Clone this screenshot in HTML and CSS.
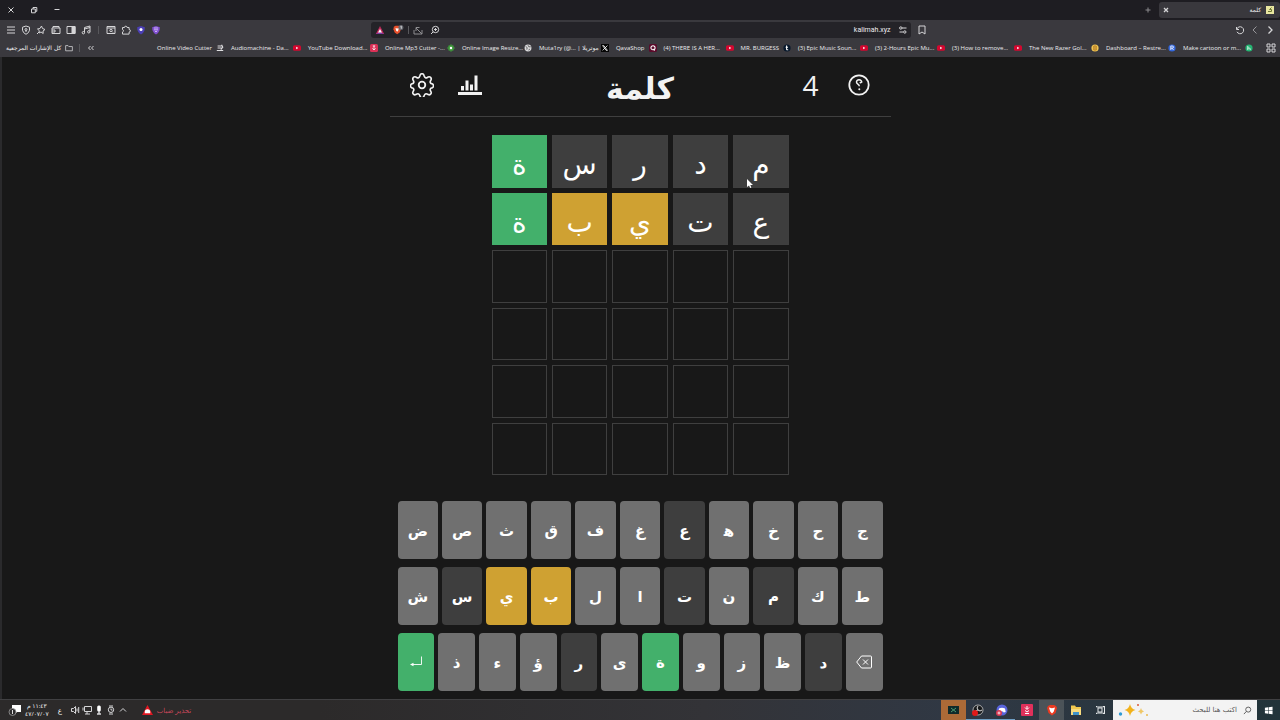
FILE: index.html
```html
<!DOCTYPE html>
<html lang="ar" dir="rtl">
<head>
  <meta charset="UTF-8" />
  <meta name="viewport" content="width=device-width, initial-scale=1" />
  <title>كلمة</title>
  <link rel="stylesheet" href="styles.css">
</head>
<body>
  <svg class="sprite" aria-hidden="true">
    <symbol id="yt" viewBox="0 0 10 10"><rect x="0" y="1.5" width="10" height="7" rx="2" fill="#d4072f"/><path d="M4 3.5v3l2.6-1.5z" fill="#fff"/></symbol>
  </svg>

  <div class="tabs">
    <div class="tab">
      <svg class="fav" viewBox="0 0 8 8"><rect width="8" height="8" fill="#e8e6a0"/><path d="M5.5 1.5L3.5 3.5h2v2H2" fill="none" stroke="#6b7430"/></svg>
      <span class="tab-title">كلمة</span>
      <button class="icon-btn" aria-label="إغلاق التبويب"><svg viewBox="0 0 10 10"><path d="M3 3l4 4M7 3L3 7" stroke-width="1.3"/></svg></button>
    </div>
    <button class="icon-btn dim" aria-label="تبويب جديد"><svg viewBox="0 0 10 10"><path d="M5 2.5v5M2.5 5h5"/></svg></button>
    <div class="window-buttons">
      <button class="icon-btn" aria-label="تصغير"><svg viewBox="0 0 10 10"><path d="M2.5 4.5h5"/></svg></button>
      <button class="icon-btn" aria-label="استعادة"><svg viewBox="0 0 10 10"><path d="M2.5 4h3.8v3.8H2.5zM4 4V2.5h3.8v3.8H6.3"/></svg></button>
      <button class="icon-btn" aria-label="إغلاق"><svg viewBox="0 0 10 10"><path d="M2.5 2.5l5 5M7.5 2.5l-5 5"/></svg></button>
    </div>
  </div>

  <div class="toolbar">
    <div class="nav">
      <button class="icon-btn" aria-label="رجوع"><svg viewBox="0 0 10 10"><path d="M3.5 1.5L7 5 3.5 8.5" stroke-width="1.3"/></svg></button>
      <button class="icon-btn dim" aria-label="تقدم"><svg viewBox="0 0 10 10"><path d="M6.5 1.5L3 5l3.5 3.5"/></svg></button>
      <button class="icon-btn" aria-label="تحديث"><svg viewBox="0 0 10 10"><path d="M1.5 2v2.5H4M1.8 4.2A3.5 3.5 0 1 1 2 6.8"/></svg></button>
      <button class="icon-btn save" aria-label="إشارة مرجعية"><svg viewBox="0 0 10 10"><path d="M2 1h6v8L5 7 2 9z"/></svg></button>
    </div>
    <div class="address">
      <svg class="ico" viewBox="0 0 10 10"><path d="M4 3h4.500M5 7H1.500"/><circle cx="2.800" cy="3" r="1.200"/><circle cx="6.800" cy="7" r="1.200"/></svg>
      <input type="text" value="kalimah.xyz" aria-label="العنوان" dir="ltr">
      <svg class="ico" viewBox="0 0 10 10"><circle cx="5.5" cy="4.5" r="3.2"/><path d="M3.2 6.800L1 9M4 4.500h3M5.500 3v3"/></svg>
      <svg class="ico dim" viewBox="0 0 10 10"><path d="M1 5v4h8V5M9 9L3 3M3 6V2.500h3.500"/></svg>
      <span class="sep"></span>
      <svg class="ico shield" viewBox="0 0 14 12"><path d="M2 2l2-1h4l2 1 .5 3L9 9l-3 2-3-2-1.5-4z" fill="#e8502c" stroke="none"/><path d="M4 3.5l2 .7 2-.7-.7 3L6 8 4.700 6.500z" fill="#fff" stroke="none"/><circle cx="10.5" cy="3" r="3" fill="#66686f" stroke="none"/><path d="M10 2l1-.5v3" stroke="#fff" stroke-width=".8"/></svg>
      <svg class="ico" viewBox="0 0 10 10"><path d="M5 1L.8 9h8.4z" fill="#c02a5a" stroke="none"/><path d="M.8 9L5 7l4.200 2z" fill="#7a3aa5" stroke="none"/><path d="M5 4L3 7.500h4z" fill="#fff" stroke="none"/></svg>
    </div>
    <div class="tools">
      <button class="icon-btn" aria-label="القائمة"><svg viewBox="0 0 10 10"><path d="M1 2h8M1 5h8M1 8h8"/></svg></button>
      <button class="icon-btn" aria-label="VPN"><svg viewBox="0 0 10 10"><path d="M5 1l3.5 1.2v3Q8 8 5 9.300 2 8 1.500 5.200v-3z"/><circle cx="5" cy="4.500" r="1"/><path d="M5 5v2"/></svg></button>
      <button class="icon-btn" aria-label="ليو"><svg viewBox="0 0 10 10"><path d="M5.5 1l1 2.500L9 4.500 7 6l.2 2.500L5 7 3 8l.3-2.300L1.500 4l2.500-.5zM3 7L1 9"/></svg></button>
      <button class="icon-btn" aria-label="المحفظة"><svg viewBox="0 0 10 10"><path d="M1 3h8v5.500H1zM2 3V1.500h6V3M1 5h3v2H1"/></svg></button>
      <button class="icon-btn" aria-label="الشريط الجانبي"><svg viewBox="0 0 10 10"><path d="M1 1.500h8v7H1z"/><path d="M6 1.500h3v7H6z" fill="#d5d5d7"/></svg></button>
      <button class="icon-btn" aria-label="الوسائط"><svg viewBox="0 0 10 10"><path d="M3.500 7.500V2.500L9 1v5.500M3.500 4L9 2.500"/><circle cx="2.400" cy="7.700" r="1.200"/><circle cx="7.800" cy="6.800" r="1.200"/></svg></button>
      <span class="sep"></span>
      <button class="icon-btn" aria-label="بحث في الصفحة"><svg viewBox="0 0 10 10"><path d="M1 1.500h8v7H1zM1 3h8"/><circle cx="5" cy="5.500" r="1.200"/><path d="M6 6.500l1 1"/></svg></button>
      <button class="icon-btn" aria-label="الإضافات"><svg viewBox="0 0 10 10"><path d="M1.500 2.500h2a1.300 1.300 0 0 1 2.600 0h2v2a1.300 1.300 0 0 1 0 2.600v2H1.500V7a1.300 1.300 0 0 0 0-2.500z"/></svg></button>
      <button class="icon-btn" aria-label="إضافة الحماية"><svg viewBox="0 0 10 10"><path d="M5 1l3.800 1.200Q9 7 5 9.500 1 7 1.200 2.200z" fill="#4b3fb5" stroke="none"/><circle cx="5" cy="4.500" r="1.500" fill="#fff" stroke="none"/></svg></button>
      <button class="icon-btn" aria-label="إضافة الخصوصية"><svg viewBox="0 0 10 10"><path d="M5 1l3.800 1.200Q9 7 5 9.500 1 7 1.200 2.200z" fill="#8050d0" stroke="none"/><path d="M3 3h4M3 4.800h4M4 6.500h2" stroke="#cbb0f5"/></svg></button>
    </div>
  </div>

  <nav class="bookmarks">
    <button class="icon-btn apps" aria-label="التطبيقات"><svg viewBox="0 0 10 10"><path d="M1 1h3v3H1zM6 1h3v3H6zM1 6h3v3H1zM6 6h3v3H6z"/></svg></button>
    <a href="#"><svg viewBox="0 0 10 10"><circle cx="5" cy="5" r="4.5" fill="#25b573"/><path d="M3.500 2.500v5M3.500 5.500q3-2 3 2" stroke="#fff"/></svg><span class="name cut">Make cartoon or m...</span></a>
    <a href="#"><svg viewBox="0 0 10 10"><circle cx="5" cy="5" r="4.5" fill="#3468dc"/><path d="M3.500 7.500v-5H5q2 0 2 1.400T5 5.200H3.500M5 5.200l2 2.300" stroke="#fff"/></svg><span class="name cut">Dashboard – Restre...</span></a>
    <a href="#"><svg viewBox="0 0 10 10"><circle cx="5" cy="5" r="4.5" fill="#f0c552"/><path d="M3.500 2.500h3v5h-3zM4 5h2" stroke="#a76b19"/></svg><span class="name cut">The New Razer Gol...</span></a>
    <a href="#"><svg><use href="#yt"/></svg><span class="name cut">(3) How to remove...</span></a>
    <a href="#"><svg><use href="#yt"/></svg><span class="name cut">(3) 2-Hours Epic Mu...</span></a>
    <a href="#"><svg><use href="#yt"/></svg><span class="name cut">(3) Epic Music Soun...</span></a>
    <a href="#"><svg viewBox="0 0 10 10"><circle cx="5" cy="5" r="4.5" fill="#06172b"/><path d="M4.500 2v4.500q0 1 2 .7M3.300 4h3" stroke="#fff" stroke-width="1.3"/></svg><span class="name">MR. BURGESS</span></a>
    <a href="#"><svg><use href="#yt"/></svg><span class="name cut">(4) THERE IS A HER...</span></a>
    <a href="#"><svg viewBox="0 0 10 10"><rect width="10" height="10" rx="2" fill="#5b0b2b"/><circle cx="5" cy="4.700" r="2.600" stroke="#fff" stroke-width="1.3"/><path d="M5.500 6l1.500 2.500" stroke="#fff"/></svg><span class="name">QavaShop</span></a>
    <a href="#"><svg viewBox="0 0 10 10"><rect width="10" height="10" fill="#050505"/><path d="M2 2h1.500L8 8H6.500zM8 2L2 8" stroke="#fff"/></svg><span class="name cut">Muta1ry (@... | موتريلا</span></a>
    <a href="#"><svg viewBox="0 0 10 10"><circle cx="5" cy="5" r="4.300" fill="#dadadc"/><path d="M2 3l2 1.500L3.500 7M5 1.500L6 3.500h2.500M6 8l1-2" stroke="#444"/></svg><span class="name cut">Online Image Resize...</span></a>
    <a href="#"><svg viewBox="0 0 10 10"><path d="M5 .5v9M.5 5h9M2 2l6 6M8 2L2 8" stroke="#3f9e3b" stroke-width="2"/><circle cx="5" cy="5" r="1.500" fill="#fff"/></svg><span class="name cut">Online Mp3 Cutter -...</span></a>
    <a href="#"><svg viewBox="0 0 10 10"><rect width="10" height="10" rx="2" fill="#dc3157"/><path d="M5 2v5M3 5.500l2 2 2-2M3.500 2.500h3" stroke="#fff"/></svg><span class="name cut">YouTube Download...</span></a>
    <a href="#"><svg><use href="#yt"/></svg><span class="name cut">Audiomachine - Da...</span></a>
    <a href="#"><svg viewBox="0 0 10 10"><path d="M2 2.500h5M2 5h6M1 8h8M7 1l1.500 3L6 7" stroke="#dedee0" stroke-width="1.3"/></svg><span class="name">Online Video Cutter</span></a>
    <div class="more">
      <button class="icon-btn" aria-label="المزيد"><svg viewBox="0 0 10 10"><path d="M4.500 3l-2 2 2 2M7.500 3l-2 2 2 2"/></svg></button>
      <span class="sep"></span>
      <a href="#"><svg viewBox="0 0 10 10"><path d="M.8 2h3l1 1.200h4.400v5.300H.8z" stroke="#cfcfd2"/></svg><span class="all">كل الإشارات المرجعية</span></a>
    </div>
  </nav>

  <main class="game">
    <header>
      <div class="side">
        <button aria-label="مساعدة"><svg viewBox="0 0 24 24"><circle cx="12" cy="12" r="9.700" stroke-width="1.800"/><path d="M14.800 9.500C14.500 5.800 9.500 6 9.500 9c0 2.500 2.800 1.800 2.800 4.300M14.800 9q-1.200 1.200-2 .2" stroke-width="1.500"/><circle cx="12.300" cy="16.300" r="1" fill="#f2f2f2" stroke="none"/></svg></button>
        <span class="streak">4</span>
      </div>
      <h1>كلمة</h1>
      <div class="side">
        <button aria-label="الإحصائيات"><svg viewBox="0 0 24 24"><path d="M0 19h24v3H0zM3 13h3v4.500H3zM7.500 7.500h3v10h-3zM12 11.500h3v6h-3zM16.500 2.500h3v15h-3z" fill="#f2f2f2" stroke="none"/></svg></button>
        <button aria-label="الإعدادات"><svg viewBox="0 0 16 16"><circle cx="8" cy="8" r="2.200" stroke-width="1.200"/><path d="M9.300 1.500c-.4-1.300-2.200-1.300-2.600 0l-.3.900a1.200 1.200 0 0 1-1.700.7l-.8-.4c-1.200-.6-2.500.6-1.900 1.900l.4.800a1.200 1.200 0 0 1-.7 1.700l-.4.100c-1.300.5-1.300 2.300 0 2.700l.4.100a1.200 1.200 0 0 1 .7 1.700l-.4.800c-.6 1.200.7 2.500 1.900 1.900l.8-.4a1.200 1.200 0 0 1 1.700.7l.3.800c.4 1.300 2.200 1.300 2.600 0l.3-.8a1.200 1.200 0 0 1 1.700-.7l.8.400c1.200.6 2.500-.7 1.900-1.900l-.4-.8a1.200 1.200 0 0 1 .7-1.700l.4-.1c1.300-.4 1.300-2.200 0-2.700l-.4-.1a1.200 1.200 0 0 1-.7-1.700l.4-.8c.6-1.300-.7-2.500-1.900-1.900l-.8.400a1.200 1.200 0 0 1-1.700-.7z" stroke-width="1.100"/></svg></button>
      </div>
    </header>

    <div class="board">
      <div class="tile absent">م<svg class="cursor" viewBox="0 0 6 9"><path d="M0 0v8l2-1.500L3.200 9l1.200-.6L3.300 6H6z" fill="#fff"/></svg></div>
      <div class="tile absent">د</div>
      <div class="tile absent">ر</div>
      <div class="tile absent">س</div>
      <div class="tile correct">ة</div>
      <div class="tile absent">ع</div>
      <div class="tile absent">ت</div>
      <div class="tile present">ي</div>
      <div class="tile present">ب</div>
      <div class="tile correct">ة</div>
      <div class="tile"></div><div class="tile"></div><div class="tile"></div><div class="tile"></div><div class="tile"></div>
      <div class="tile"></div><div class="tile"></div><div class="tile"></div><div class="tile"></div><div class="tile"></div>
      <div class="tile"></div><div class="tile"></div><div class="tile"></div><div class="tile"></div><div class="tile"></div>
      <div class="tile"></div><div class="tile"></div><div class="tile"></div><div class="tile"></div><div class="tile"></div>
    </div>

    <div class="keyboard">
      <div class="row">
        <button>ج</button><button>ح</button><button>خ</button><button>ه&zwj;</button><button class="absent">ع</button><button>غ</button><button>ف</button><button>ق</button><button>ث</button><button>ص</button><button>ض</button>
      </div>
      <div class="row">
        <button>ط</button><button>ك</button><button class="absent">م</button><button>ن</button><button class="absent">ت</button><button>ا</button><button>ل</button><button class="present">ب</button><button class="present">ي</button><button class="absent">س</button><button>ش</button>
      </div>
      <div class="row">
        <button aria-label="حذف"><svg viewBox="0 0 16 16"><path d="M5.500 2h9q1 0 1 1v10q0 1-1 1h-9L.7 8zM7 5.500l5 5M12 5.500l-5 5"/></svg></button><button class="absent">د</button><button>ظ</button><button>ز</button><button>و</button><button class="correct">ة</button><button>ى</button><button class="absent">ر</button><button>ؤ</button><button>ء</button><button>ذ</button><button class="correct" aria-label="إدخال"><svg viewBox="0 0 16 16"><path d="M13.500 2.500v8H3" stroke-width=".9"/><path d="M2 10.500L5.500 8.800v3.400z" fill="#fff" stroke="none"/></svg></button>
      </div>
    </div>
  </main>

  <footer class="taskbar">
    <button class="start" aria-label="ابدأ"><svg viewBox="0 0 10 10"><path d="M1 2l3.600-.5v3.200H1zM5.200 1.400L9.500.8v3.900H5.200zM1 5.300h3.600v3.200L1 8zM5.200 5.300h4.300v3.900l-4.300-.6z" fill="#fff"/></svg></button>
    <label class="search">
      <svg class="glass" viewBox="0 0 10 10"><circle cx="5.800" cy="4" r="2.800"/><path d="M3.800 6L1 9"/></svg>
      <input type="text" placeholder="اكتب هنا للبحث" aria-label="بحث">
      <svg class="sparkle" viewBox="0 0 32 16"><path d="M12 2q1 5 5.500 6-4.500 1-5.500 6-1-5-5.500-6 4.500-1 5.500-6z" fill="#f2b21b"/><path d="M23 6q.5 3 3 3.500-2.500.5-3 3-.5-2.500-3-3 2.500-.5 3-3.500z" fill="#f0c765"/><circle cx="2.500" cy="12" r="1.700" fill="#2e9bd6"/><circle cx="20" cy="3" r="1" fill="#d85b3a"/><circle cx="29" cy="13" r="1" fill="#eabb4e"/></svg>
    </label>
    <div class="apps-row">
      <button aria-label="عرض المهام"><svg viewBox="0 0 12 12"><path d="M3 4h4v4H3zM9.500 2v8M1.500 2v1h7V2M1.500 10V9h7v1" stroke="#e4e8ea"/></svg></button>
      <button aria-label="الملفات"><svg viewBox="0 0 12 12"><path d="M1 1.500h4l1 1.500h5v8H1z" fill="#f3c94f"/><path d="M1 5h10v6H1z" fill="#f8dc7f"/><path d="M3 8h6v3H3z" fill="#3f93c9"/></svg></button>
      <button class="active" aria-label="Brave"><svg viewBox="0 0 12 12"><path d="M2 2l2-1h4l2 1 1 2-1.500 5L6 11.500 2.500 9 1 4z" fill="#ea3a20"/><path d="M3 3.500l3 .7 3-.7-1.200 4L6 9.500 4.200 7.500z" fill="#fff"/></svg></button>
      <button aria-label="التنزيلات"><svg viewBox="0 0 12 12"><rect width="12" height="12" rx="1" fill="#e0305b"/><path d="M6 2v3M4 3.500l2 2 2-2M4 6.500l2 1.500 2-1.500M4 9.500h4" stroke="#fff"/></svg></button>
      <button class="open" aria-label="Discord"><svg viewBox="0 0 12 12"><circle cx="6" cy="6" r="5.500" fill="#5965dc"/><path d="M3 4.500q3-1.500 6 0l.7 3.500-2 .5-.7-1H5l-.7 1-2-.5z" fill="#fff"/><circle cx="3" cy="9" r="3" fill="#d93850"/><path d="M1.500 9h3M3 7.500v3" stroke="#fff" stroke-width=".8"/></svg></button>
      <button class="open" aria-label="OBS"><svg viewBox="0 0 12 12"><circle cx="6" cy="6" r="5" fill="#17191b" stroke="#c8c8c8" stroke-width=".8"/><path d="M6 2q-2 2 0 4 2 2 4 0M6 6q-3 0-3 3" stroke="#ddd"/><circle cx="3" cy="9" r="3" fill="#e11919"/></svg></button>
      <button class="orange" aria-label="لوحة"><svg viewBox="0 0 12 12"><rect x="1" y="2" width="11" height="8" fill="#102a2a"/><path d="M4 4l5 4M9 4L4 8" stroke="#4f9b72"/></svg></button>
    </div>
    <div class="tray">
      <div class="weather">
        <svg viewBox="0 0 12 12"><path d="M6 0l6 11H0z" fill="#e01620"/><path d="M3 9V7.500a3 3 0 0 1 6 0V9z" fill="#fff"/></svg>
        <span>تحذير ضباب</span>
      </div>
      <svg class="ico" viewBox="0 0 10 10"><path d="M2 6.500L5 3.500l3 3"/></svg>
      <svg class="ico" viewBox="0 0 10 10"><circle cx="5" cy="4.800" r="2.700"/><path d="M3 1h4M3 9h4M5 3.500V5h1.500"/></svg>
      <svg class="ico" viewBox="0 0 10 10"><rect x="3.200" y=".5" width="3.600" height="6" rx="1.500" fill="#fff" stroke="none"/><path d="M5 6v3M3 9h4" stroke-width="1.500"/></svg>
      <svg class="ico" viewBox="0 0 10 10"><path d="M2.500 1.500h7v5h-7zM1 2.500v3M5 6.500V9M3 9h5"/></svg>
      <svg class="ico" viewBox="0 0 10 10"><path d="M5.500 1.500v7L3.500 6.500h-2v-3h2zM7 3.500v3M8.700 2v6"/></svg>
      <span class="lang">ع</span>
      <div class="clock"><span>١١:٤٣ م</span><span>٤٧/٠٧/٠٧</span></div>
      <svg class="ico note" viewBox="0 0 14 12"><path d="M4 1h9v7H9l-2 2V8H4z" fill="#fff" stroke="none"/><circle cx="4.500" cy="8" r="3.500" fill="#2d2c2d" stroke="#999" stroke-width=".8"/><path d="M4.500 6v4" stroke="#ddd"/></svg>
    </div>
  </footer>
</body>
</html>
```
FILE: styles.css
```css
* {
  box-sizing: border-box;
}
body {
  margin: 0;
  min-height: 100vh;
  display: flex;
  flex-direction: column;
  background: #181818;
  color: #f2f2f2;
  font-family: "Open Sans", "DejaVu Sans", sans-serif;
}
button {
  font-family: inherit;
  color: inherit;
  border: none;
  padding: 0;
  background: none;
  cursor: pointer;
}
svg {
  display: block;
  fill: none;
}
a {
  color: inherit;
  text-decoration: none;
}
.sprite {
  display: none;
}

/* browser window */
.icon-btn, .ico {
  width: 10px;
  height: 10px;
  flex: none;
  stroke: #d5d5d7;
}
.dim {
  opacity: 0.6;
}
.sep {
  width: 1px;
  height: 8px;
  background: #58585c;
}
.tabs {
  height: 20px;
  display: flex;
  align-items: center;
  gap: 6px;
  background: #1e1d22;
}
.tab {
  width: 121px;
  height: 16px;
  padding: 0 6px 0 2px;
  display: flex;
  align-items: center;
  gap: 5px;
  background: #39383d;
  border-radius: 3px;
}
.fav {
  width: 8px;
  height: 8px;
}
.tab-title {
  flex: 1;
  font-size: 6px;
}
.window-buttons {
  margin-right: auto;
  padding-left: 6px;
  display: flex;
  gap: 13px;
}
.toolbar {
  height: 20px;
  padding: 0 5px 0 6px;
  display: grid;
  grid-template-columns: 1fr minmax(0, 540px) 1fr;
  align-items: center;
  background: #3a393e;
}
.nav, .tools, .address {
  display: flex;
  align-items: center;
  gap: 5px;
}
.tools {
  direction: ltr;
}
.tools .sep {
  margin: 0 2px;
}
.save {
  margin-right: auto;
  margin-left: 6px;
}
.address {
  height: 16px;
  padding: 0 3px 0 4px;
  gap: 7px;
  background: #242328;
  border-radius: 3px;
}
.address input {
  flex: 1;
  min-width: 0;
  padding: 0;
  border: none;
  background: none;
  color: #ececee;
  text-align: right;
  font: 7px Roboto, sans-serif;
}
.address .sep {
  margin: 0 -3px;
}
.address .shield {
  width: 12px;
}
.bookmarks {
  height: 17px;
  padding: 0 4px 2px 6px;
  display: flex;
  align-items: center;
  gap: 7px;
  background: #3a393e;
}
.bookmarks a {
  display: flex;
  align-items: center;
  gap: 4px;
}
.bookmarks a svg {
  width: 8px;
  height: 8px;
  flex: none;
}
.apps {
  margin-left: 6px;
}
.name {
  direction: ltr;
  white-space: nowrap;
  font: 6px "Open Sans", "DejaVu Sans", sans-serif;
  color: #ececee;
}
.cut {
  width: 58px;
}
.more {
  margin-right: auto;
  display: flex;
  align-items: center;
  gap: 6px;
}
.all {
  font: 6px "DejaVu Sans", sans-serif;
  white-space: nowrap;
}

/* game */
.game {
  flex: 1;
  display: flex;
  flex-direction: column;
  align-items: center;
  gap: 18px;
  padding-bottom: 8px;
  box-shadow: inset 2px 0 #2a2a2c;
}
header {
  width: 100%;
  max-width: 501px;
  height: 60px;
  padding: 0 20px 3px;
  display: flex;
  align-items: center;
  border-bottom: 1px solid #3f3f3f;
}
.side {
  flex: 1;
  display: flex;
  align-items: center;
  gap: 24px;
}
.side:last-child {
  justify-content: flex-end;
}
.side svg {
  width: 24px;
  height: 24px;
  stroke: #f2f2f2;
}
.streak {
  width: 24px;
  text-align: center;
  font-size: 28px;
  line-height: 32px;
}
h1 {
  margin: 0;
  padding-top: 6px;
  font-size: 30px;
  line-height: 48px;
}
.board {
  width: 100%;
  max-width: 297px;
  height: 340px;
  display: grid;
  grid-template-columns: repeat(5, 1fr);
  grid-template-rows: repeat(6, 1fr);
  gap: 5px;
}
.tile {
  position: relative;
  display: flex;
  align-items: center;
  justify-content: center;
  padding-top: 4px;
  border: 1px solid #3f3f3f;
  color: #fff;
  font-size: 28px;
  line-height: 32px;
}
.tile.absent, .keyboard .absent {
  background: #3e3e3e;
}
.tile.present, .keyboard .present {
  background: #cfa132;
  border-color: #cfa132;
}
.tile.correct, .keyboard .correct {
  background: #43b06b;
  border-color: #43b06b;
}
.cursor {
  position: absolute;
  left: 13px;
  top: 43px;
  width: 6px;
  height: 9px;
}
.keyboard {
  width: 100%;
  max-width: 501px;
  margin-top: auto;
  padding: 0 8px;
  display: flex;
  flex-direction: column;
  gap: 8px;
}
.row {
  display: flex;
  gap: 4px;
}
.row button {
  flex: 1;
  height: 58px;
  display: flex;
  align-items: center;
  justify-content: center;
  border-radius: 4px;
  background: #707070;
  color: #fff;
  font-size: 15px;
  font-weight: bold;
}
.row svg {
  width: 16px;
  height: 16px;
  stroke: #fff;
}

/* taskbar */
.taskbar {
  height: 21px;
  display: flex;
  align-items: stretch;
  border-top: 1px solid #404042;
  background: linear-gradient(to left, #22343a, #303844 25%, #333337 45%, #2c2a2a 75%);
}
.start {
  width: 23px;
  display: flex;
  align-items: center;
  justify-content: center;
}
.start svg {
  width: 9px;
  height: 9px;
}
.search {
  width: 144px;
  padding: 0 5px;
  display: flex;
  align-items: center;
  gap: 6px;
  background: #f3f3f3;
}
.glass {
  width: 9px;
  height: 9px;
  stroke: #555;
}
.search input {
  flex: 1;
  min-width: 0;
  padding: 0;
  border: none;
  background: none;
  font: 7px "DejaVu Sans", sans-serif;
}
.search input::placeholder {
  color: #555;
}
.sparkle {
  width: 32px;
  height: 16px;
}
.apps-row {
  width: 172px;
  display: flex;
}
.apps-row button {
  flex: 1;
  display: flex;
  align-items: center;
  justify-content: center;
}
.apps-row svg {
  width: 12px;
  height: 12px;
}
.apps-row .active {
  background: #4b5358;
}
.apps-row .open {
  border-bottom: 1px solid #6f9fc4;
}
.apps-row .orange {
  background: #ac6a37;
}
.tray {
  margin-right: auto;
  padding-left: 8px;
  display: flex;
  align-items: center;
  gap: 2px;
}
.weather {
  margin-left: 12px;
  display: flex;
  align-items: center;
  gap: 4px;
  direction: ltr;
  color: #c9485a;
  font-size: 7px;
}
.weather svg {
  width: 11px;
  height: 11px;
}
.lang {
  width: 16px;
  text-align: center;
  font-size: 7px;
}
.clock {
  margin: 0 1px;
  display: flex;
  flex-direction: column;
  align-items: center;
  font-size: 6px;
  line-height: 8px;
}
.note {
  width: 14px;
  height: 12px;
}
```
